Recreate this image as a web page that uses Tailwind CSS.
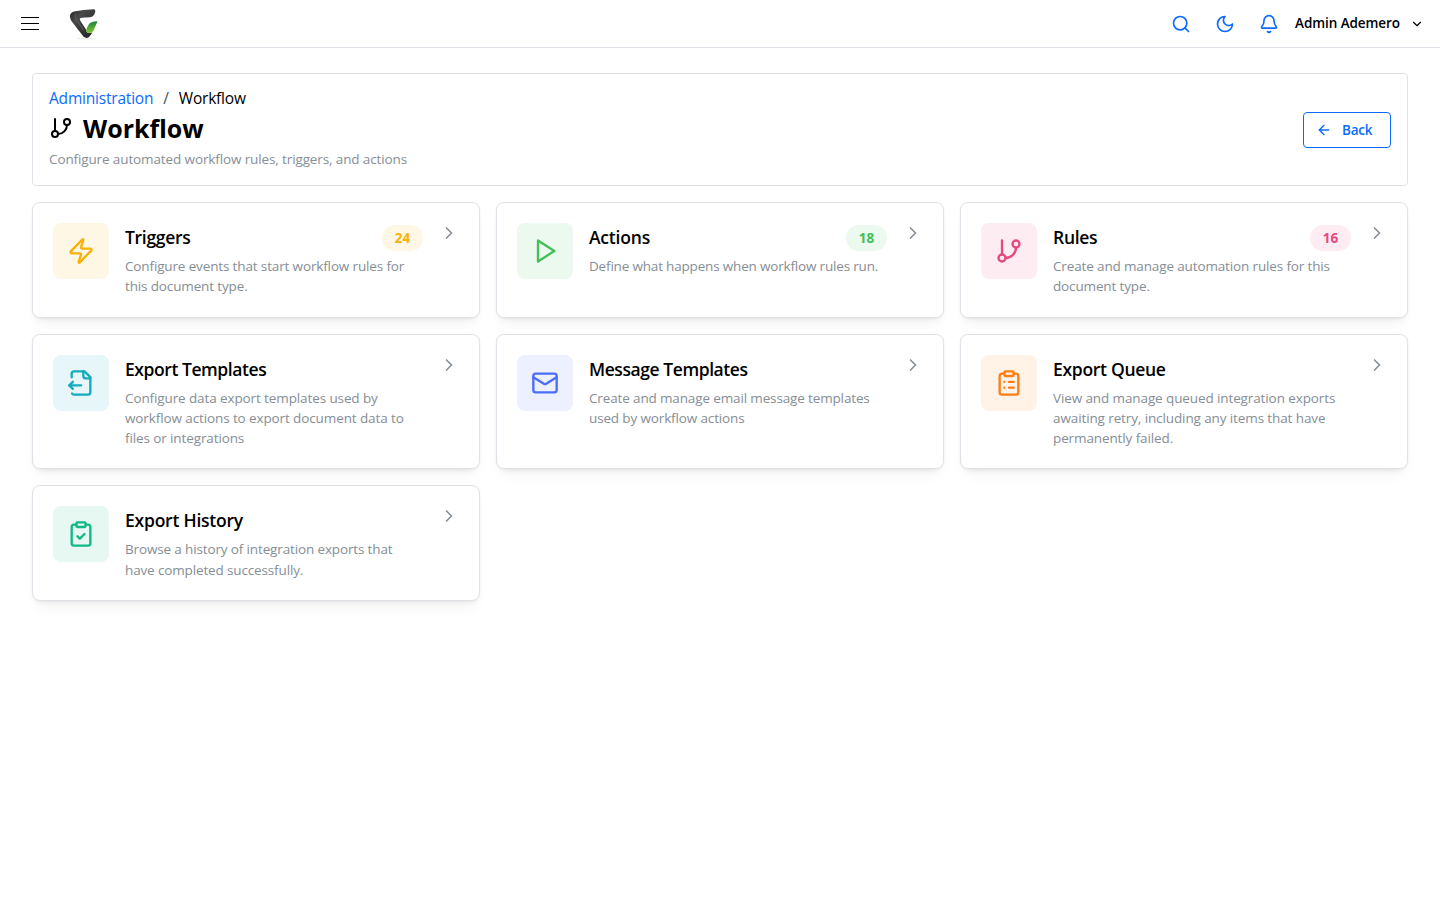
<!DOCTYPE html>
<html lang="en">
  <head>
    <meta charset="UTF-8" />
    <meta name="viewport" content="width=device-width, initial-scale=1.0" />
    <title>Workflow</title>
    <script src="https://cdn.jsdelivr.net/npm/@tailwindcss/browser@4"></script>
  </head>
  <body class="bg-white text-black min-h-screen font-['Segoe_UI','Open_Sans','Noto_Sans',sans-serif]">
    <!-- icons -->
    <svg class="hidden">
      <symbol id="chevron-right" viewBox="0 0 24 24"><path d="m9 18 6-6-6-6" /></symbol>
      <symbol id="git-branch" viewBox="0 0 24 24">
        <path d="M6 3v12" />
        <circle cx="18" cy="6" r="3" />
        <circle cx="6" cy="18" r="3" />
        <path d="M18 9a9 9 0 0 1-9 9" />
      </symbol>
    </svg>

    <header class="flex items-center justify-between h-12 pl-[21px] pr-4 border-b border-[#dee2e6]">
      <div class="flex items-center gap-[30px]">
        <button class="flex flex-col gap-[5px] w-[18px]" aria-label="Menu">
          <span class="h-px w-full bg-black"></span>
          <span class="h-px w-full bg-black"></span>
          <span class="h-px w-full bg-black"></span>
        </button>
        <svg class="w-[30px] h-8" viewBox="0 0 30 32">
          <defs>
            <linearGradient id="dark" x1="0" y1="0" x2="1" y2="1">
              <stop offset="0" stop-color="#222" />
              <stop offset=".3" stop-color="#4a4a4a" />
              <stop offset="1" stop-color="#1c1c1c" />
            </linearGradient>
            <linearGradient id="green" x1="0" y1="0" x2="0" y2="1">
              <stop offset="0" stop-color="#1f8040" />
              <stop offset="1" stop-color="#80c92c" />
            </linearGradient>
          </defs>
          <ellipse cx="17" cy="30.5" rx="9" ry="1" fill="#ececec" />
          <path d="M5 3.4 Q14 1.6 25 1.3 Q26.6 1.4 26.2 3.8 Q25.4 8.8 21 9.2 L12.6 9.8 Q9.8 10.2 11.2 12.4 L17 21.5 Q17.4 25 20.5 25 L23.4 24.6 Q21.4 27.8 20 29 Q17.4 31 14.6 28.8 L2.2 12.8 Q-1.4 5.6 5 3.4Z" fill="url(#dark)" />
          <path d="M7 5.6 Q5 8 7 11 L14.6 22.5" fill="none" stroke="#888" stroke-width=".8" opacity=".5" />
          <path d="M28.4 13.8 Q28.6 13.2 27.8 13.3 Q22.4 13.6 20.2 15.8 Q18.4 18.2 17.2 22.2 Q17.2 24.8 20 25 Q23.2 25 24.4 22.8 Z" fill="url(#green)" />
        </svg>
      </div>
      <div class="flex items-center text-[#0b6bff]">
        <svg class="size-5 mr-6" viewBox="0 0 24 24" fill="none" stroke="currentColor" stroke-width="2" stroke-linecap="round" stroke-linejoin="round">
          <circle cx="11" cy="11" r="8" />
          <path d="m21 21-4.3-4.3" />
        </svg>
        <svg class="size-5 mr-6" viewBox="0 0 24 24" fill="none" stroke="currentColor" stroke-width="2" stroke-linecap="round" stroke-linejoin="round">
          <path d="M12 3a6 6 0 0 0 9 9 9 9 0 1 1-9-9Z" />
        </svg>
        <svg class="size-5 mr-4" viewBox="0 0 24 24" fill="none" stroke="currentColor" stroke-width="2" stroke-linecap="round" stroke-linejoin="round">
          <path d="M10.268 21a2 2 0 0 0 3.464 0" />
          <path d="M3.262 15.326A1 1 0 0 0 4 17h16a1 1 0 0 0 .74-1.673C19.41 13.956 18 12.499 18 8A6 6 0 0 0 6 8c0 4.499-1.411 5.956-2.738 7.326" />
        </svg>
        <button class="flex items-center gap-[10px] text-black">
          <span class="w-[105px] text-[13.5px] tracking-[-0.08px] font-semibold whitespace-nowrap">Admin Ademero</span>
          <svg class="size-[14px]" viewBox="0 0 24 24" fill="none" stroke="currentColor" stroke-width="2" stroke-linecap="round" stroke-linejoin="round"><path d="m6 9 6 6 6-6" /></svg>
        </button>
      </div>
    </header>

    <main class="px-8 pt-[25px]">
      <section class="flex items-center justify-between h-[113px] px-4 border border-[#dee2e6] rounded">
        <div>
          <nav class="flex items-center h-[23px] text-[15.5px] tracking-[-0.2px]">
            <a href="#" class="text-[#0b6bff]">Administration</a>
            <span class="mx-[10px] text-[#495057]">/</span>
            <span>Workflow</span>
          </nav>
          <div class="flex items-center gap-[10px] h-[37px]">
            <svg class="size-6 mb-0.5" fill="none" stroke="currentColor" stroke-width="2" stroke-linecap="round" stroke-linejoin="round"><use href="#git-branch" /></svg>
            <h1 class="text-[25px] font-bold">Workflow</h1>
          </div>
          <p class="text-[13.5px] leading-[25px] tracking-[-0.12px] text-[#868e96]">Configure automated workflow rules, triggers, and actions</p>
        </div>
        <button class="flex items-center gap-[10px] w-[88px] h-9 pl-3 border border-[#0b6bff] rounded text-[#0b6bff] text-[13.5px] tracking-[-0.2px] font-semibold">
          <svg class="size-4" viewBox="0 0 24 24" fill="none" stroke="currentColor" stroke-width="2" stroke-linecap="round" stroke-linejoin="round"><path d="m12 19-7-7 7-7" /><path d="M19 12H5" /></svg>
          <span class="pt-px">Back</span>
        </button>
      </section>

      <section class="grid grid-cols-3 gap-4 mt-4">
        <a href="#" class="flex items-start gap-4 p-5 border border-[#dee2e6] rounded-lg bg-white shadow-[0_1px_3px_rgba(0,0,0,0.05),0_10px_15px_-5px_rgba(0,0,0,0.05),0_7px_7px_-5px_rgba(0,0,0,0.04)]">
          <div class="flex items-center justify-center shrink-0 size-14 rounded-lg bg-[#fff7e6] text-[#fab005]">
            <svg class="size-7" viewBox="0 0 24 24" fill="none" stroke="currentColor" stroke-width="2" stroke-linecap="round" stroke-linejoin="round"><path d="M4 14a1 1 0 0 1-.78-1.63l9.9-10.2a.5.5 0 0 1 .86.46l-1.92 6.02A1 1 0 0 0 13 10h7a1 1 0 0 1 .78 1.63l-9.9 10.2a.5.5 0 0 1-.86-.46l1.92-6.02A1 1 0 0 0 11 14z" /></svg>
          </div>
          <div class="flex-1">
            <div class="flex items-center justify-between h-[29px] mb-1">
              <h2 class="text-[17.5px] tracking-[-0.3px] font-semibold">Triggers</h2>
              <span class="w-[41px] h-[26px] leading-[26px] rounded-full text-center text-[13.5px] font-bold bg-[#fff7e6] text-[#fab005]">24</span>
            </div>
            <p class="text-[13.5px] leading-[20.3px] tracking-[-0.14px] text-[#868e96]">Configure events that start workflow rules for<br />this document type.</p>
          </div>
          <svg class="size-5 shrink-0 text-[#868e96]" fill="none" stroke="currentColor" stroke-width="2" stroke-linecap="round" stroke-linejoin="round"><use href="#chevron-right" /></svg>
        </a>

        <a href="#" class="flex items-start gap-4 p-5 border border-[#dee2e6] rounded-lg bg-white shadow-[0_1px_3px_rgba(0,0,0,0.05),0_10px_15px_-5px_rgba(0,0,0,0.05),0_7px_7px_-5px_rgba(0,0,0,0.04)]">
          <div class="flex items-center justify-center shrink-0 size-14 rounded-lg bg-[#ecf9ee] text-[#40c057]">
            <svg class="size-7" viewBox="0 0 24 24" fill="none" stroke="currentColor" stroke-width="2" stroke-linecap="round" stroke-linejoin="round"><path d="m6 3 14 9-14 9z" /></svg>
          </div>
          <div class="flex-1">
            <div class="flex items-center justify-between h-[29px] mb-1">
              <h2 class="text-[17.5px] tracking-[-0.2px] font-semibold">Actions</h2>
              <span class="w-[41px] h-[26px] leading-[26px] rounded-full text-center text-[13.5px] font-bold bg-[#ecf9ee] text-[#40c057]">18</span>
            </div>
            <p class="text-[13.5px] leading-[20.3px] tracking-[-0.18px] text-[#868e96]">Define what happens when workflow rules run.</p>
          </div>
          <svg class="size-5 shrink-0 text-[#868e96]" fill="none" stroke="currentColor" stroke-width="2" stroke-linecap="round" stroke-linejoin="round"><use href="#chevron-right" /></svg>
        </a>

        <a href="#" class="flex items-start gap-4 p-5 border border-[#dee2e6] rounded-lg bg-white shadow-[0_1px_3px_rgba(0,0,0,0.05),0_10px_15px_-5px_rgba(0,0,0,0.05),0_7px_7px_-5px_rgba(0,0,0,0.04)]">
          <div class="flex items-center justify-center shrink-0 size-14 rounded-lg bg-[#fdedf2] text-[#e64980]">
            <svg class="size-7" fill="none" stroke="currentColor" stroke-width="2" stroke-linecap="round" stroke-linejoin="round"><use href="#git-branch" /></svg>
          </div>
          <div class="flex-1">
            <div class="flex items-center justify-between h-[29px] mb-1">
              <h2 class="text-[17.5px] tracking-[-0.3px] font-semibold">Rules</h2>
              <span class="w-[41px] h-[26px] leading-[26px] rounded-full text-center text-[13.5px] font-bold bg-[#fdedf2] text-[#e64980]">16</span>
            </div>
            <p class="text-[13.5px] leading-[20.3px] tracking-[-0.14px] text-[#868e96]">Create and manage automation rules for this<br />document type.</p>
          </div>
          <svg class="size-5 shrink-0 text-[#868e96]" fill="none" stroke="currentColor" stroke-width="2" stroke-linecap="round" stroke-linejoin="round"><use href="#chevron-right" /></svg>
        </a>

        <a href="#" class="flex items-start gap-4 p-5 border border-[#dee2e6] rounded-lg bg-white shadow-[0_1px_3px_rgba(0,0,0,0.05),0_10px_15px_-5px_rgba(0,0,0,0.05),0_7px_7px_-5px_rgba(0,0,0,0.04)]">
          <div class="flex items-center justify-center shrink-0 size-14 rounded-lg bg-[#e7f6f9] text-[#15aabf]">
            <svg class="size-7" viewBox="0 0 24 24" fill="none" stroke="currentColor" stroke-width="2" stroke-linecap="round" stroke-linejoin="round">
              <path d="M14 2v4a2 2 0 0 0 2 2h4" />
              <path d="M4 7V4a2 2 0 0 1 2-2h9l5 5v13a2 2 0 0 1-2 2H6a2 2 0 0 1-1.7-1" />
              <path d="M2 14h10" />
              <path d="m5 11-3 3 3 3" />
            </svg>
          </div>
          <div class="flex-1">
            <div class="flex items-center h-[29px] mb-1">
              <h2 class="text-[17.5px] tracking-[-0.43px] font-semibold">Export Templates</h2>
            </div>
            <p class="text-[13.5px] leading-[20.3px] tracking-[-0.11px] text-[#868e96]">Configure data export templates used by<br />workflow actions to export document data to<br />files or integrations</p>
          </div>
          <svg class="size-5 shrink-0 text-[#868e96]" fill="none" stroke="currentColor" stroke-width="2" stroke-linecap="round" stroke-linejoin="round"><use href="#chevron-right" /></svg>
        </a>

        <a href="#" class="flex items-start gap-4 p-5 border border-[#dee2e6] rounded-lg bg-white shadow-[0_1px_3px_rgba(0,0,0,0.05),0_10px_15px_-5px_rgba(0,0,0,0.05),0_7px_7px_-5px_rgba(0,0,0,0.04)]">
          <div class="flex items-center justify-center shrink-0 size-14 rounded-lg bg-[#edf0fe] text-[#4c6ef5]">
            <svg class="size-7" viewBox="0 0 24 24" fill="none" stroke="currentColor" stroke-width="2" stroke-linecap="round" stroke-linejoin="round">
              <rect x="2" y="4" width="20" height="16" rx="2" />
              <path d="m22 7-8.991 5.727a2 2 0 0 1-2.009 0L2 7" />
            </svg>
          </div>
          <div class="flex-1">
            <div class="flex items-center h-[29px] mb-1">
              <h2 class="text-[17.5px] tracking-[-0.43px] font-semibold">Message Templates</h2>
            </div>
            <p class="text-[13.5px] leading-[20.3px] tracking-[-0.14px] text-[#868e96]">Create and manage email message templates<br />used by workflow actions</p>
          </div>
          <svg class="size-5 shrink-0 text-[#868e96]" fill="none" stroke="currentColor" stroke-width="2" stroke-linecap="round" stroke-linejoin="round"><use href="#chevron-right" /></svg>
        </a>

        <a href="#" class="flex items-start gap-4 p-5 border border-[#dee2e6] rounded-lg bg-white shadow-[0_1px_3px_rgba(0,0,0,0.05),0_10px_15px_-5px_rgba(0,0,0,0.05),0_7px_7px_-5px_rgba(0,0,0,0.04)]">
          <div class="flex items-center justify-center shrink-0 size-14 rounded-lg bg-[#fff2e7] text-[#fd7e14]">
            <svg class="size-7" viewBox="0 0 24 24" fill="none" stroke="currentColor" stroke-width="2" stroke-linecap="round" stroke-linejoin="round">
              <rect x="8" y="2" width="8" height="4" rx="1" />
              <path d="M16 4h2a2 2 0 0 1 2 2v14a2 2 0 0 1-2 2H6a2 2 0 0 1-2-2V6a2 2 0 0 1 2-2h2" />
              <path d="M12 11h4M12 16h4M8 11h.01M8 16h.01" />
            </svg>
          </div>
          <div class="flex-1">
            <div class="flex items-center h-[29px] mb-1">
              <h2 class="text-[17.5px] tracking-[-0.3px] font-semibold">Export Queue</h2>
            </div>
            <p class="text-[13.5px] leading-[20.3px] tracking-[-0.11px] text-[#868e96]">View and manage queued integration exports<br />awaiting retry, including any items that have<br />permanently failed.</p>
          </div>
          <svg class="size-5 shrink-0 text-[#868e96]" fill="none" stroke="currentColor" stroke-width="2" stroke-linecap="round" stroke-linejoin="round"><use href="#chevron-right" /></svg>
        </a>

        <a href="#" class="flex items-start gap-4 p-5 border border-[#dee2e6] rounded-lg bg-white shadow-[0_1px_3px_rgba(0,0,0,0.05),0_10px_15px_-5px_rgba(0,0,0,0.05),0_7px_7px_-5px_rgba(0,0,0,0.04)]">
          <div class="flex items-center justify-center shrink-0 size-14 rounded-lg bg-[#e7f8f3] text-[#12b886]">
            <svg class="size-7" viewBox="0 0 24 24" fill="none" stroke="currentColor" stroke-width="2" stroke-linecap="round" stroke-linejoin="round">
              <rect x="8" y="2" width="8" height="4" rx="1" />
              <path d="M16 4h2a2 2 0 0 1 2 2v14a2 2 0 0 1-2 2H6a2 2 0 0 1-2-2V6a2 2 0 0 1 2-2h2" />
              <path d="m9 14 2 2 4-4" />
            </svg>
          </div>
          <div class="flex-1">
            <div class="flex items-center h-[28px] mb-[5px]">
              <h2 class="text-[17.5px] tracking-[-0.22px] font-semibold">Export History</h2>
            </div>
            <p class="text-[13.5px] leading-[20.3px] tracking-[-0.14px] text-[#868e96]">Browse a history of integration exports that<br />have completed successfully.</p>
          </div>
          <svg class="size-5 shrink-0 text-[#868e96]" fill="none" stroke="currentColor" stroke-width="2" stroke-linecap="round" stroke-linejoin="round"><use href="#chevron-right" /></svg>
        </a>
      </section>
    </main>
  </body>
</html>
